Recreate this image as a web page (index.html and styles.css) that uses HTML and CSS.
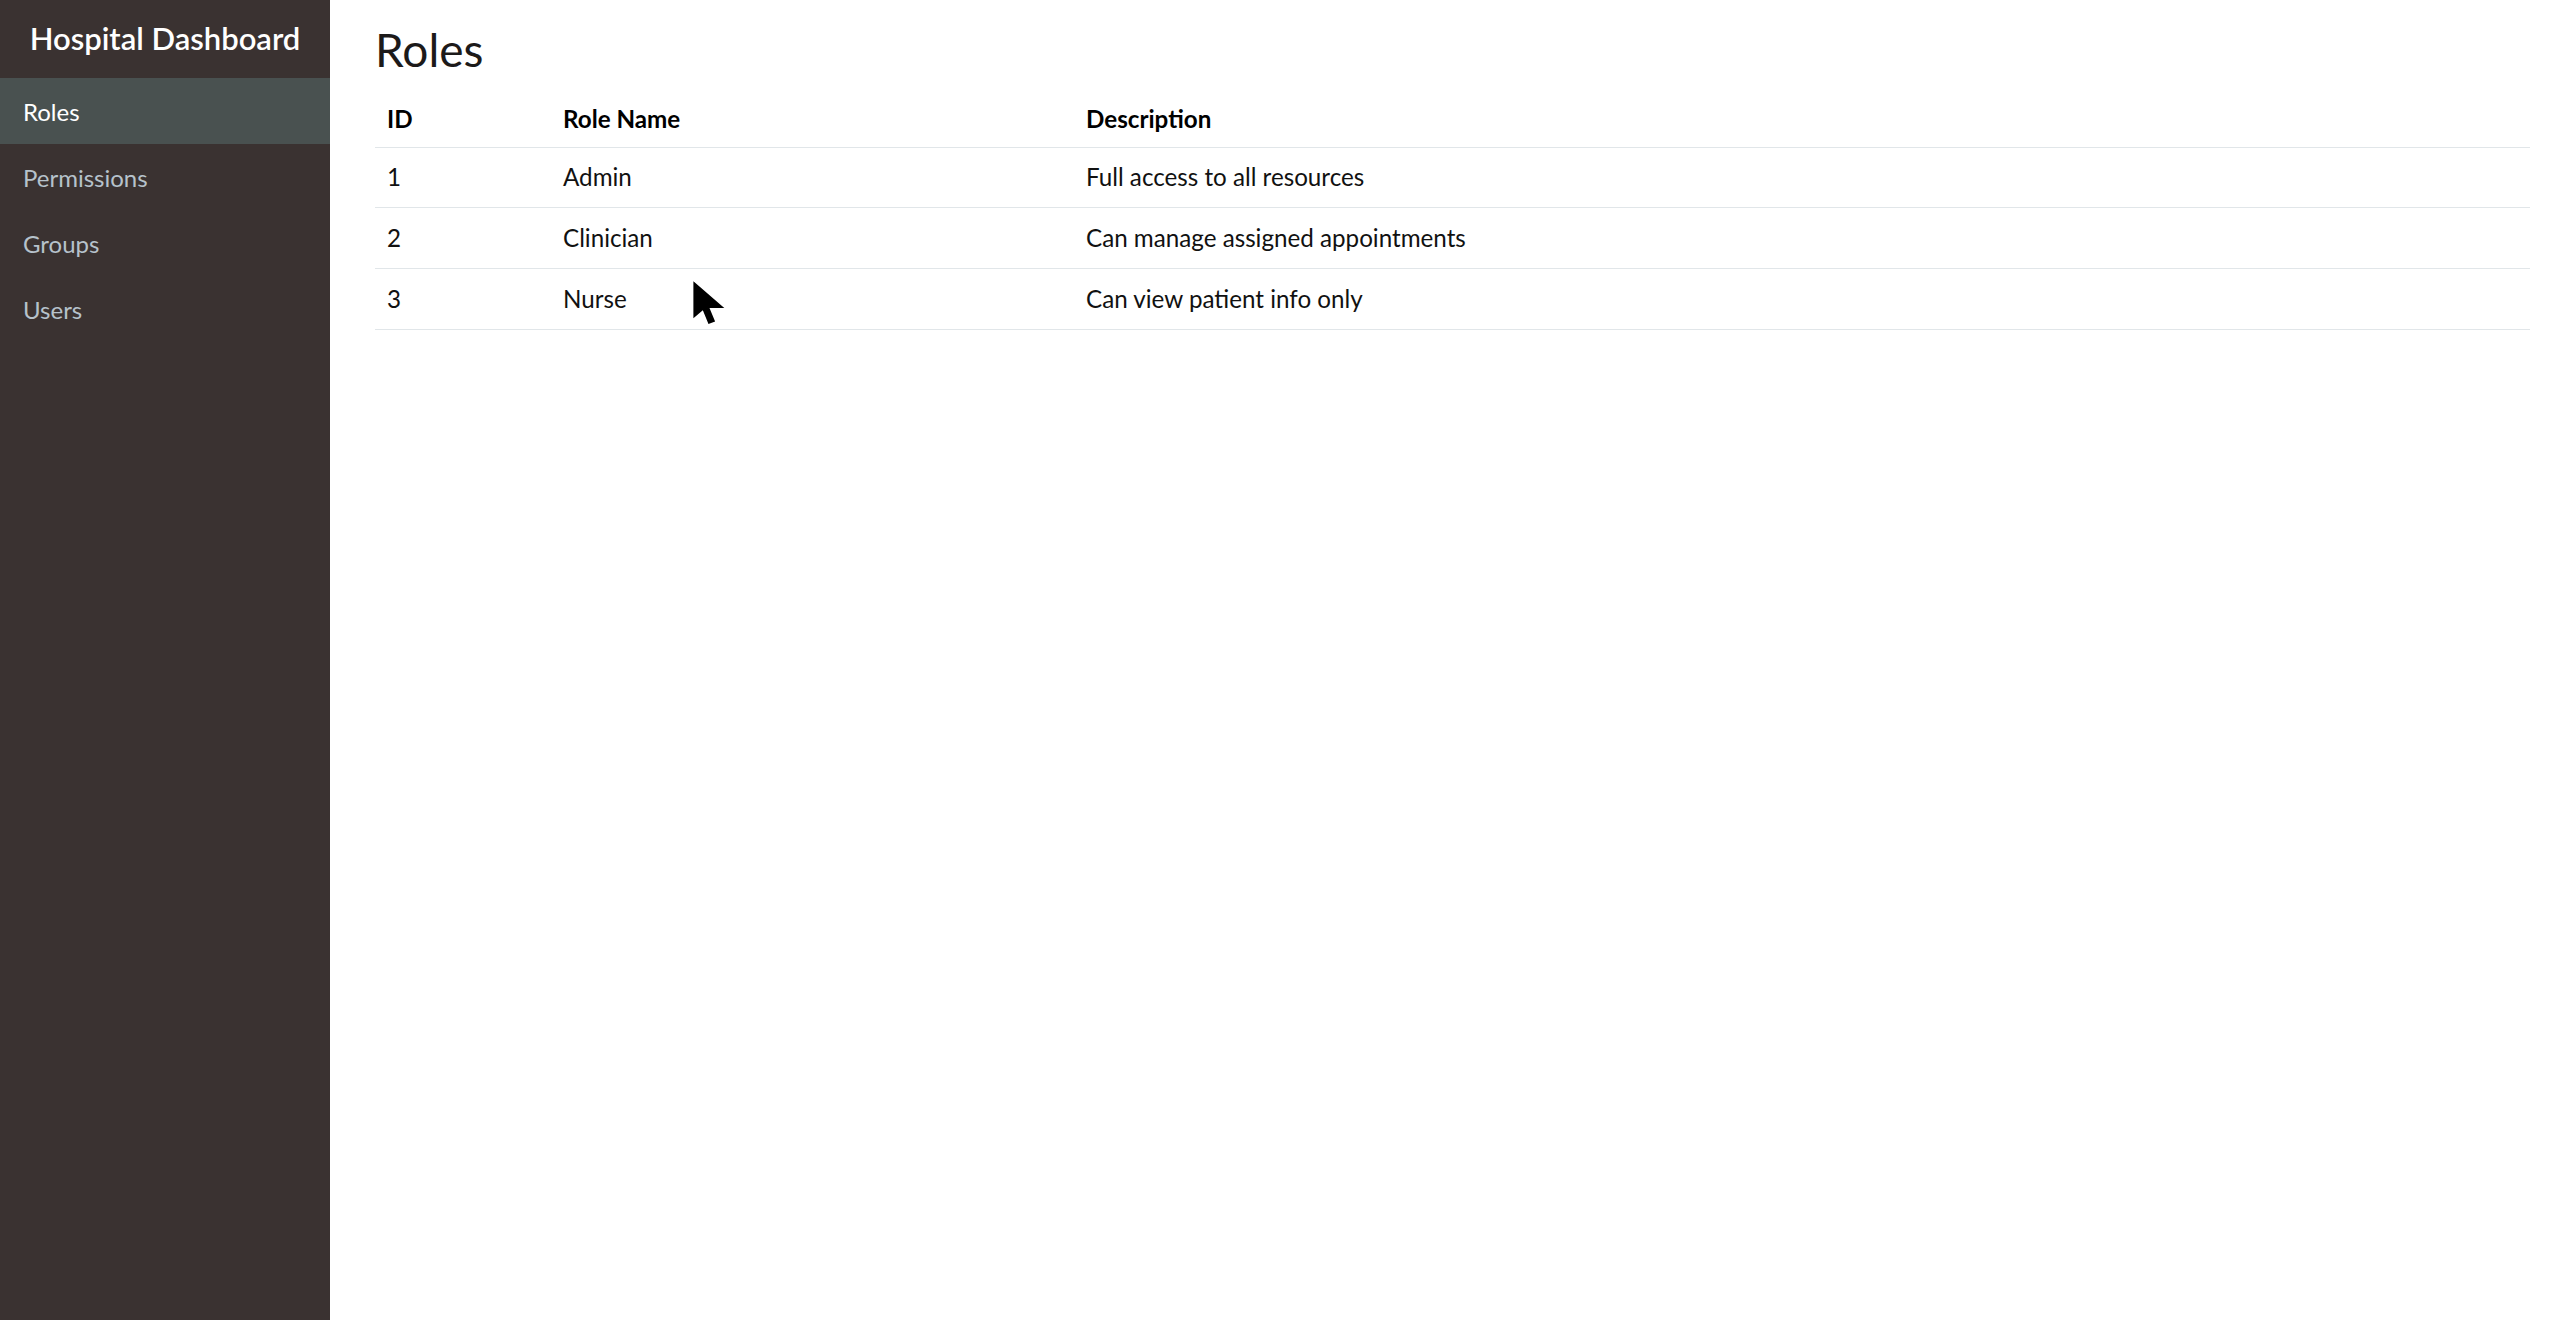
FILE: index.html
```html
<!DOCTYPE html>
<html lang="en">
<head>
  <meta charset="UTF-8" />
  <meta name="viewport" content="width=device-width, initial-scale=1.0" />
  <title>Hospital Dashboard</title>
  <link rel="stylesheet" href="styles.css">
</head>
<body>
  <div class="layout">
    <aside class="sidebar">
      <div class="brand">Hospital Dashboard</div>
      <nav class="nav">
        <a class="nav-item active" href="#">Roles</a>
        <a class="nav-item" href="#">Permissions</a>
        <a class="nav-item" href="#">Groups</a>
        <a class="nav-item" href="#">Users</a>
      </nav>
    </aside>

    <main class="main">
      <h2>Roles</h2>
      <table class="roles">
        <thead>
          <tr>
            <th class="col-id">ID</th>
            <th class="col-name">Role Name</th>
            <th>Description</th>
          </tr>
        </thead>
        <tbody>
          <tr>
            <td>1</td>
            <td>Admin</td>
            <td>Full access to all resources</td>
          </tr>
          <tr>
            <td>2</td>
            <td>Clinician</td>
            <td>Can manage assigned appointments</td>
          </tr>
          <tr>
            <td>3</td>
            <td>Nurse</td>
            <td>Can view patient info only</td>
          </tr>
        </tbody>
      </table>
    </main>
  </div>

  <svg class="cursor" width="36" height="46" viewBox="0 0 14 18">
    <path d="M0.5 0.5 L0.5 15 L4.2 11.8 L6.4 17.2 L9 16.2 L6.8 11 L12.6 11 Z" fill="#000"/>
  </svg>
</body>
</html>
```

FILE: styles.css
```css
body {
  margin: 0;
  font-family: Lato, "Open Sans", sans-serif;
  color: #111;
  background: #fff;
}
.layout {
  display: flex;
  min-height: 100vh;
}
.sidebar {
  width: 330px;
  flex-shrink: 0;
  background: #3a3231;
}
.brand {
  height: 76px;
  padding-bottom: 2px;
  display: flex;
  align-items: center;
  justify-content: center;
  color: #fff;
  font-size: 31px;
  font-weight: 600;
}
.nav {
  display: flex;
  flex-direction: column;
}
.nav-item {
  height: 66px;
  display: flex;
  align-items: center;
  padding-left: 23px;
  color: #b6c2cb;
  font-size: 24px;
  text-decoration: none;
}
.nav-item.active {
  background: #495150;
  color: #fff;
}
.main {
  flex: 1;
  padding: 0 30px 0 45px;
}
h2 {
  margin: 22px 0 10px;
  font-size: 46px;
  font-weight: 400;
  line-height: 1.2;
  color: #1c1a1a;
}
.roles {
  width: 100%;
  border-collapse: collapse;
  font-size: 24.2px;
}
.roles th,
.roles td {
  text-align: left;
  padding: 15px 12px;
  line-height: 30px;
  border-bottom: 1px solid #e1e6e9;
}
.roles tbody tr:first-child td {
  padding-top: 14px;
}
.roles th {
  padding-top: 17px;
  padding-bottom: 13px;
  font-weight: 700;
  color: #000;
}
.col-id {
  width: 152px;
}
.col-name {
  width: 499px;
}
.cursor {
  position: absolute;
  left: 692px;
  top: 280px;
}
```
